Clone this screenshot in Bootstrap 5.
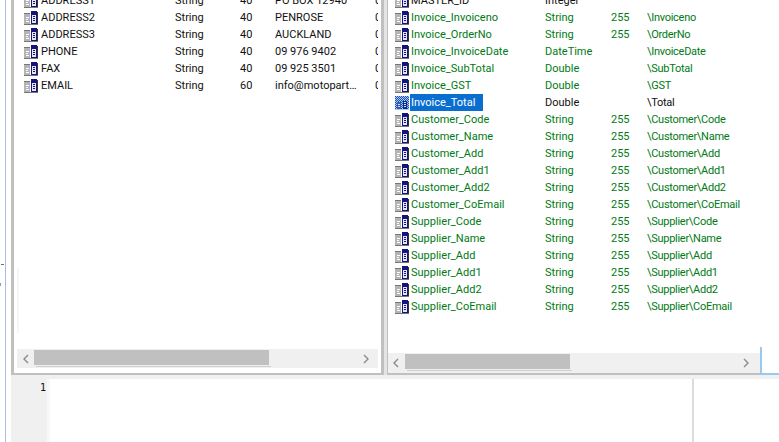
<!DOCTYPE html>
<html lang="en">
<head>
<meta charset="utf-8">
<title>Report fields</title>
<link href="https://cdn.jsdelivr.net/npm/bootstrap@5.3.0/dist/css/bootstrap.min.css" rel="stylesheet">
<style>
html,body{height:442px;overflow:hidden;background:#fff}
body{font-family:Roboto,"Liberation Sans",Arial,sans-serif;font-size:11px;line-height:17px;color:#111;position:relative}
.shell{height:442px;margin-left:5px;border-left:1px solid #a9bfe0;padding-left:5px}
.panes{height:375px;background:#fff}
.pane{border:solid #c0c0c0;border-width:0 3px 2px 3px;position:relative}
.pane-a{width:373px}
.pane-a::before{content:"";position:absolute;left:3px;top:268px;width:2px;height:65px;background:#f6f6f6}
.pane-b{width:376px;margin-left:3px;border-left:1px solid #c0c0c0;border-right:0;box-shadow:-3px 0 0 #e4e4e4}
.rows{margin-top:-8px;overflow:hidden;white-space:nowrap}
.pane-a .rows{padding-left:10px}
.pane-b .rows{padding-left:7px}
.rowx{height:17px;display:flex;align-items:center}
.ico{width:14px;height:14px;flex:none;margin-right:3px}
.pane-b .ico{margin-right:2px}
.c1{width:134px;flex:none}
.c2{width:65px;flex:none}
.pane-b .c2{width:66px}
.c3{width:35px;flex:none}
.pane-b .c3{width:36px}
.c4{width:100px;flex:none}
.pane-b .c4{letter-spacing:-.28px}
.c5{width:3px;overflow:hidden;flex:none}
.grn{color:#007a14}
.sel{background:#0a6ed1;color:#fff;display:block;margin-left:-1px;padding-left:1px;width:73px;height:17px}
.scr{height:20px;background:#f0f0f0;position:relative;flex:none}
.pane-a .scr{margin:0 3px 5px 3px;height:19px}
.pane-b .scr{margin-right:3px}
.thumb{position:absolute;top:1px;height:15px;background:#c0c0c0}
.thumb::after{content:"";position:absolute;left:2px;right:-2px;bottom:-2px;height:1px;background:#cfcfcf}
.arr{position:absolute;top:5px;width:8px;height:10px}
.edit{height:67px;border-top:4px solid #f0f0f0}
.gutter{width:36px;background:#f0f0f0;color:#111;text-align:right;padding-right:1px;font-family:"DejaVu Sans Mono","Liberation Mono",monospace;font-size:10px;font-weight:500;line-height:18px;flex:none}
.sliver{width:3px;background:#f8f8f8;flex:none}
.area{width:644px;border-right:2px solid #dcdcdc;flex:none}
.corner{position:absolute;left:760px;top:347px;width:19px;height:28px;border-left:2px solid #99c9ef;border-bottom:2px solid #99c9ef}
.edge{position:absolute;background:#6e6e6e}
</style>
</head>
<body>
<svg width="0" height="0" class="position-absolute">
<symbol id="fld" viewBox="0 0 14 14">
<rect x="0" y="2" width="6" height="11" fill="#b4b4b4"/><rect x="0" y="2" width="6" height="1" fill="#777"/><rect x="2" y="6" width="3" height="1" fill="#fff"/><rect x="2" y="8" width="2" height="1" fill="#fff"/><rect x="2" y="10" width="3" height="1" fill="#fff"/>
<rect x="7" y="0" width="6" height="13" fill="#14147e"/><rect x="8" y="4" width="4" height="8" fill="#e6e6f4"/><rect x="9" y="5" width="2" height="1" fill="#14147e"/><rect x="9" y="7" width="2" height="1" fill="#14147e"/><rect x="9" y="9" width="2" height="1" fill="#14147e"/>
<rect x="13" y="1" width="1" height="12" fill="#333"/><rect x="0" y="13" width="14" height="1" fill="#777"/>
</symbol>
<symbol id="fldsel" viewBox="0 0 14 14">
<rect width="14" height="14" fill="#a8c8f0"/><path d="M0 .5h14M1 1.5h13M0 2.5h14M1 3.5h13M0 4.5h14M1 5.5h13M0 6.5h14M1 7.5h13M0 8.5h14M1 9.5h13M0 10.5h14M1 11.5h13M0 12.5h14" stroke="#1c4fb0" stroke-dasharray="1 1"/><rect x="8" y="5" width="4" height="8" fill="#0a2a8a"/><rect x="2" y="6" width="4" height="7" fill="#2f5cb4"/><rect x="9" y="6" width="2" height="1" fill="#cfe0f8"/><rect x="9" y="8" width="2" height="1" fill="#cfe0f8"/><rect x="9" y="10" width="2" height="1" fill="#cfe0f8"/><rect x="3" y="8" width="2" height="1" fill="#cfe0f8"/><rect x="3" y="10" width="2" height="1" fill="#cfe0f8"/>
</symbol>
<symbol id="al" viewBox="0 0 8 10"><path d="M6 1 2 5l4 4" fill="none" stroke="#8a8a8a" stroke-width="1.4"/></symbol>
<symbol id="ar" viewBox="0 0 8 10"><path d="M2 1l4 4-4 4" fill="none" stroke="#8a8a8a" stroke-width="1.4"/></symbol>
</svg>
<div class="shell">
<div class="panes d-flex">
<section class="pane pane-a d-flex flex-column">
<div class="rows flex-grow-1">
<div class="rowx"><svg class="ico"><use href="#fld"/></svg><span class="c1">ADDRESS1</span><span class="c2">String</span><span class="c3">40</span><span class="c4">PO BOX 12940</span><span class="c5">0</span></div>
<div class="rowx"><svg class="ico"><use href="#fld"/></svg><span class="c1">ADDRESS2</span><span class="c2">String</span><span class="c3">40</span><span class="c4">PENROSE</span><span class="c5">0</span></div>
<div class="rowx"><svg class="ico"><use href="#fld"/></svg><span class="c1">ADDRESS3</span><span class="c2">String</span><span class="c3">40</span><span class="c4">AUCKLAND</span><span class="c5">0</span></div>
<div class="rowx"><svg class="ico"><use href="#fld"/></svg><span class="c1">PHONE</span><span class="c2">String</span><span class="c3">40</span><span class="c4">09 976 9402</span><span class="c5">0</span></div>
<div class="rowx"><svg class="ico"><use href="#fld"/></svg><span class="c1">FAX</span><span class="c2">String</span><span class="c3">40</span><span class="c4">09 925 3501</span><span class="c5">0</span></div>
<div class="rowx"><svg class="ico"><use href="#fld"/></svg><span class="c1">EMAIL</span><span class="c2">String</span><span class="c3">60</span><span class="c4">info@motopart…</span><span class="c5">0</span></div>
</div>
<div class="scr"><svg class="arr" style="left:5px"><use href="#al"/></svg><div class="thumb" style="left:17px;width:235px"></div><svg class="arr" style="left:345px"><use href="#ar"/></svg></div>
</section>
<section class="pane pane-b d-flex flex-column">
<div class="rows flex-grow-1">
<div class="rowx"><svg class="ico"><use href="#fld"/></svg><span class="c1">MASTER_ID</span><span class="c2">Integer</span></div>
<div class="rowx grn"><svg class="ico"><use href="#fld"/></svg><span class="c1">Invoice_Invoiceno</span><span class="c2">String</span><span class="c3">255</span><span class="c4">\Invoiceno</span></div>
<div class="rowx grn"><svg class="ico"><use href="#fld"/></svg><span class="c1">Invoice_OrderNo</span><span class="c2">String</span><span class="c3">255</span><span class="c4">\OrderNo</span></div>
<div class="rowx grn"><svg class="ico"><use href="#fld"/></svg><span class="c1">Invoice_InvoiceDate</span><span class="c2">DateTime</span><span class="c3"></span><span class="c4">\InvoiceDate</span></div>
<div class="rowx grn"><svg class="ico"><use href="#fld"/></svg><span class="c1">Invoice_SubTotal</span><span class="c2">Double</span><span class="c3"></span><span class="c4">\SubTotal</span></div>
<div class="rowx grn"><svg class="ico"><use href="#fld"/></svg><span class="c1">Invoice_GST</span><span class="c2">Double</span><span class="c3"></span><span class="c4">\GST</span></div>
<div class="rowx"><svg class="ico"><use href="#fldsel"/></svg><span class="c1"><span class="sel">Invoice_Total</span></span><span class="c2">Double</span><span class="c3"></span><span class="c4">\Total</span></div>
<div class="rowx grn"><svg class="ico"><use href="#fld"/></svg><span class="c1">Customer_Code</span><span class="c2">String</span><span class="c3">255</span><span class="c4">\Customer\Code</span></div>
<div class="rowx grn"><svg class="ico"><use href="#fld"/></svg><span class="c1">Customer_Name</span><span class="c2">String</span><span class="c3">255</span><span class="c4">\Customer\Name</span></div>
<div class="rowx grn"><svg class="ico"><use href="#fld"/></svg><span class="c1">Customer_Add</span><span class="c2">String</span><span class="c3">255</span><span class="c4">\Customer\Add</span></div>
<div class="rowx grn"><svg class="ico"><use href="#fld"/></svg><span class="c1">Customer_Add1</span><span class="c2">String</span><span class="c3">255</span><span class="c4">\Customer\Add1</span></div>
<div class="rowx grn"><svg class="ico"><use href="#fld"/></svg><span class="c1">Customer_Add2</span><span class="c2">String</span><span class="c3">255</span><span class="c4">\Customer\Add2</span></div>
<div class="rowx grn"><svg class="ico"><use href="#fld"/></svg><span class="c1">Customer_CoEmail</span><span class="c2">String</span><span class="c3">255</span><span class="c4">\Customer\CoEmail</span></div>
<div class="rowx grn"><svg class="ico"><use href="#fld"/></svg><span class="c1">Supplier_Code</span><span class="c2">String</span><span class="c3">255</span><span class="c4">\Supplier\Code</span></div>
<div class="rowx grn"><svg class="ico"><use href="#fld"/></svg><span class="c1">Supplier_Name</span><span class="c2">String</span><span class="c3">255</span><span class="c4">\Supplier\Name</span></div>
<div class="rowx grn"><svg class="ico"><use href="#fld"/></svg><span class="c1">Supplier_Add</span><span class="c2">String</span><span class="c3">255</span><span class="c4">\Supplier\Add</span></div>
<div class="rowx grn"><svg class="ico"><use href="#fld"/></svg><span class="c1">Supplier_Add1</span><span class="c2">String</span><span class="c3">255</span><span class="c4">\Supplier\Add1</span></div>
<div class="rowx grn"><svg class="ico"><use href="#fld"/></svg><span class="c1">Supplier_Add2</span><span class="c2">String</span><span class="c3">255</span><span class="c4">\Supplier\Add2</span></div>
<div class="rowx grn"><svg class="ico"><use href="#fld"/></svg><span class="c1">Supplier_CoEmail</span><span class="c2">String</span><span class="c3">255</span><span class="c4">\Supplier\CoEmail</span></div>
</div>
<div class="scr"><svg class="arr" style="left:4px"><use href="#al"/></svg><div class="thumb" style="left:17px;width:165px"></div><svg class="arr" style="left:354px"><use href="#ar"/></svg></div>
</section>
</div>
<div class="edit d-flex">
<div class="gutter">1</div>
<div class="sliver"></div>
<div class="area"></div>
</div>
</div>
<div class="corner"></div>
<i class="edge" style="left:1px;top:264px;width:3px;height:1px"></i>
<i class="edge" style="left:0;top:283px;width:1px;height:3px;background:#7f9fc8"></i>
</body>
</html>
